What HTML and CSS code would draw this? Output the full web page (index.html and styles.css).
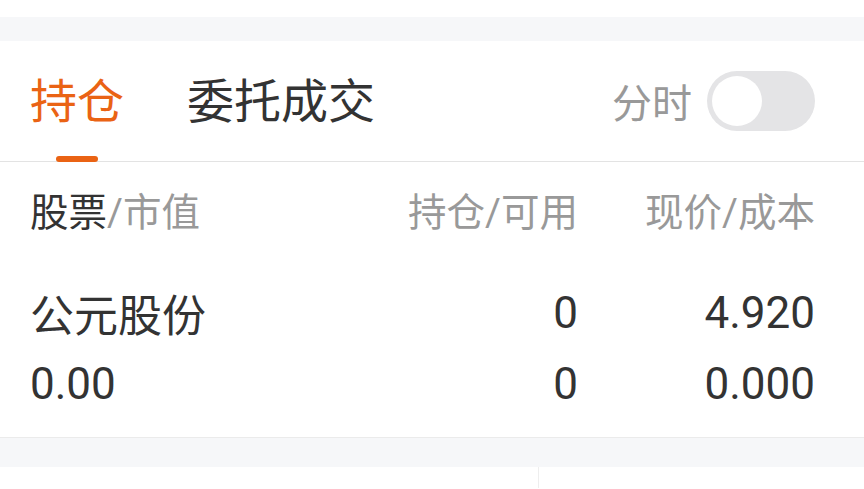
FILE: index.html
```html
<!DOCTYPE html>
<html lang="zh-CN">
<head>
  <meta charset="UTF-8">
  <title>持仓</title>
  <link rel="stylesheet" href="styles.css">
</head>
<body>
  <div class="top-space"></div>
  <div class="band"></div>

  <div class="tabs">
    <div class="tab active">持仓</div>
    <div class="tab">委托成交</div>
    <div class="timeshare">
      <span class="timeshare-label">分时</span>
      <span class="switch"><span class="knob"></span></span>
    </div>
  </div>

  <div class="table-head">
    <div class="col-name"><span class="dark">股票</span>/市值</div>
    <div class="col-qty">持仓/可用</div>
    <div class="col-price">现价/成本</div>
  </div>

  <div class="holding">
    <div class="col-name">公元股份</div>
    <div class="col-qty">0</div>
    <div class="col-price">4.920</div>
    <div class="col-name">0.00</div>
    <div class="col-qty">0</div>
    <div class="col-price">0.000</div>
  </div>

  <div class="band bottom-band"></div>
  <div class="bottom-bar">
    <div class="half"></div>
    <div class="half"></div>
  </div>
</body>
</html>
```

FILE: styles.css
```css
body {
  margin: 0;
  background-color: #fff;
  font-family: Roboto, "Noto Sans CJK SC", sans-serif;
  color: #333;
}

.top-space {
  height: 17px;
}

.band {
  height: 24px;
  background-color: #f6f7f9;
}

.tabs {
  display: flex;
  align-items: center;
  height: 120px;
  padding: 0 49px 0 30px;
  border-bottom: 1px solid #e3e3e3;
}

.tab {
  position: relative;
  font-size: 47px;
  line-height: 1;
  margin-right: 63px;
  color: #333;
}

.tab.active {
  color: #ea6314;
}

.tab.active::after {
  content: "";
  position: absolute;
  left: 26px;
  bottom: -37px;
  width: 42px;
  height: 6px;
  border-radius: 3px;
  background-color: #ea6314;
}

.timeshare {
  margin-left: auto;
  display: flex;
  align-items: center;
  gap: 15px;
}

.timeshare-label {
  font-size: 40px;
  color: #999;
}

.switch {
  display: flex;
  align-items: center;
  width: 108px;
  height: 60px;
  padding: 0 5px;
  box-sizing: border-box;
  border-radius: 30px;
  background-color: #e4e4e6;
}

.knob {
  width: 50px;
  height: 50px;
  border-radius: 50%;
  background-color: #fff;
}

.table-head,
.holding {
  display: grid;
  grid-template-columns: 1fr 240px 237px;
  padding: 0 49px 0 30px;
  align-items: center;
}

.table-head {
  height: 94px;
  padding-bottom: 6px;
  font-size: 38.5px;
  color: #999;
}

.table-head .dark {
  color: #333;
}

.holding {
  grid-auto-rows: 71px;
  padding-top: 15px;
  padding-bottom: 18px;
  font-size: 44px;
  border-bottom: 1px solid #ebebeb;
}

.col-qty,
.col-price {
  text-align: right;
}

.bottom-band {
  height: 29px;
}

.bottom-bar {
  display: flex;
  height: 21px;
}

.half {
  width: 538px;
  border-right: 1px solid #eee;
}

.half + .half {
  flex: 1;
  border-right: none;
}
```
